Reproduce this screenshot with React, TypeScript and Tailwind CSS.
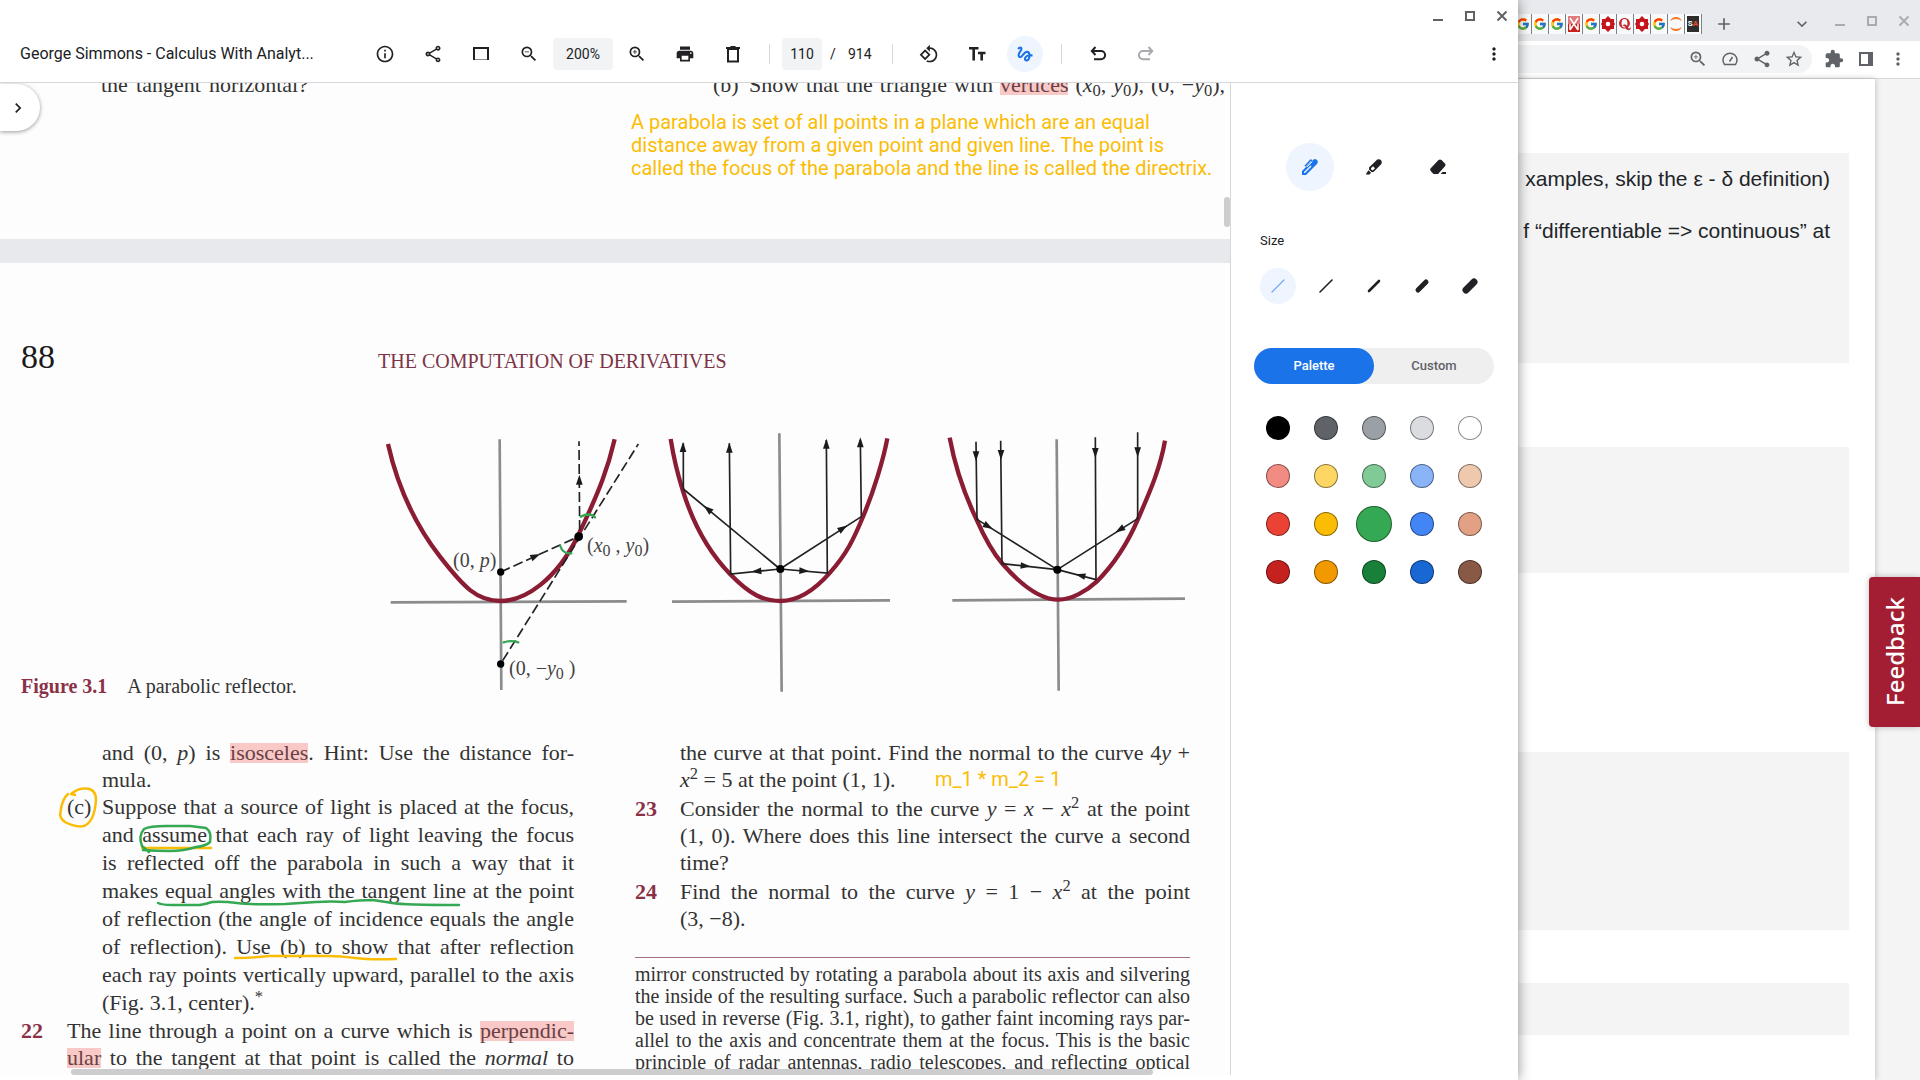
import type { ReactNode } from "react";
import {
  MdChevronRight,
  MdExpandMore,
  MdExtension,
  MdGesture,
  MdInfoOutline,
  MdMoreVert,
  MdOutlineShare,
  MdPrint,
  MdRotate90DegreesCcw,
  MdShare,
  MdStarBorder,
  MdZoomIn,
  MdZoomOut,
  MdAdd,
} from "react-icons/md";
import { FcGoogle } from "react-icons/fc";
import { FaQuora } from "react-icons/fa";

/* ---------- small drawings ---------- */

function WindowControls({ className }: { className: string }) {
  return (
    <div className={`flex gap-4 ${className}`}>
      <button aria-label="Minimize" className="size-4">
        <svg viewBox="0 0 16 16" className="size-4">
          <path d="M3 12h10" stroke="currentColor" strokeWidth="2" />
        </svg>
      </button>
      <button aria-label="Maximize" className="size-4">
        <svg viewBox="0 0 16 16" className="size-4">
          <path d="M4 4h8v8H4z" fill="none" stroke="currentColor" strokeWidth="2" />
        </svg>
      </button>
      <button aria-label="Close" className="size-4">
        <svg viewBox="0 0 16 16" className="size-4">
          <path d="M3.5 3.5l9 9M12.500 3.500l-9 9" stroke="currentColor" strokeWidth="2" />
        </svg>
      </button>
    </div>
  );
}

function ToolButton({ label, active, children }: { label: string; active?: boolean; children: ReactNode }) {
  return (
    <button
      aria-label={label}
      className={`flex size-9 shrink-0 items-center justify-center rounded-full ${active ? "bg-[#eff5fe] text-[#1a73e8]" : ""}`}
    >
      {children}
    </button>
  );
}

function Divider() {
  return <span className="h-5 w-px shrink-0 bg-[#d5d7da]" />;
}

function UndoArrow({ flip }: { flip?: boolean }) {
  return (
    <svg viewBox="0 0 20 20" className={`size-5 ${flip ? "-scale-x-100" : ""}`}>
      <path d="M4 7h9a3.800 3.800 0 0 1 0 8.200H6M7.500 3L3.800 7l3.700 4" fill="none" stroke="currentColor" strokeWidth="2" />
    </svg>
  );
}

/* ---------- toolbar ---------- */

function Toolbar() {
  return (
    <div className="flex h-9 items-center text-[#202124]">
      <h1 className="w-[347px] shrink-0 text-base">George Simmons - Calculus With Analyt...</h1>
      <div className="flex items-center gap-3">
        <ToolButton label="Info">
          <MdInfoOutline className="size-5" />
        </ToolButton>
        <ToolButton label="Share">
          <MdOutlineShare className="size-5" />
        </ToolButton>
        <ToolButton label="Fit page">
          <svg viewBox="0 0 18 18" className="size-[18px]">
            <path d="M2 15V3h14v12" fill="none" stroke="currentColor" strokeWidth="2" />
            <path d="M3 14.500h12" stroke="#8a8c8f" strokeWidth="1" />
          </svg>
        </ToolButton>
        <ToolButton label="Zoom out">
          <MdZoomOut className="size-5" />
        </ToolButton>
      </div>
      <input
        aria-label="Zoom level"
        defaultValue="200%"
        className="mx-[6px] h-8 w-[60px] rounded bg-[#f1f3f4] text-center text-sm outline-none"
      />
      <div className="flex items-center gap-3">
        <ToolButton label="Zoom in">
          <MdZoomIn className="size-5" />
        </ToolButton>
        <ToolButton label="Print">
          <MdPrint className="size-5" />
        </ToolButton>
        <ToolButton label="Delete">
          <svg viewBox="0 0 18 18" className="size-[18px]">
            <path d="M4 4h10v12.500H4zM2 3h14M6.500 2h5" fill="none" stroke="currentColor" strokeWidth="2" />
          </svg>
        </ToolButton>
      </div>
      <div className="ml-[18px] flex items-center gap-3">
        <Divider />
        <div className="flex items-center text-sm">
          <input
            aria-label="Page number"
            defaultValue="110"
            className="h-8 w-10 rounded bg-[#f1f3f4] text-center text-sm outline-none"
          />
          <span className="w-[26px] pl-2">/</span>
          <span>914</span>
        </div>
      </div>
      <div className="ml-5 flex items-center">
        <Divider />
        <div className="mx-[18px] flex items-center gap-3">
          <ToolButton label="Rotate">
            <MdRotate90DegreesCcw className="size-5" />
          </ToolButton>
          <ToolButton label="Text annotation">
            <svg viewBox="0 0 20 20" className="size-5">
              <path d="M2 4.200h9.500M6.700 4.200V16.500M11 9h7.500M14.700 9v7.500" fill="none" stroke="currentColor" strokeWidth="2.600" />
            </svg>
          </ToolButton>
          <ToolButton label="Annotate" active>
            <MdGesture className="size-5" />
          </ToolButton>
        </div>
        <Divider />
        <div className="ml-[18px] flex items-center gap-3">
          <ToolButton label="Undo">
            <UndoArrow />
          </ToolButton>
          <ToolButton label="Redo">
            <span className="text-[#a8aaad]">
              <UndoArrow flip />
            </span>
          </ToolButton>
        </div>
      </div>
      <button aria-label="More options" className="mr-[14px] ml-auto">
        <MdMoreVert className="size-5" />
      </button>
    </div>
  );
}

/* ---------- book page ---------- */

function Line({ children, last }: { children: ReactNode; last?: boolean }) {
  return (
    <span className={`block whitespace-nowrap ${last ? "" : "[text-align-last:justify]"}`}>{children}</span>
  );
}

function Mark({ children }: { children: ReactNode }) {
  return <mark className="inline-block bg-[#f8c9c6] leading-5 text-[#6b4044]">{children}</mark>;
}

function Axes({ v, h }: { v: number[]; h: number[] }) {
  return (
    <g stroke="#8c8c8c" strokeWidth="8">
      <line x1={v[0]} y1={v[1]} x2={v[2]} y2={v[3]} />
      <line x1={h[0]} y1={h[1]} x2={h[2]} y2={h[3]} />
    </g>
  );
}

function Head({ x, y, a }: { x: number; y: number; a: number }) {
  return <polygon points="14,0 -16,10 -16,-10" fill="#1b1b1b" transform={`translate(${x} ${y}) rotate(${a})`} />;
}

const curve = { fill: "none", stroke: "#8a1c34", strokeWidth: 13 };
const ray = { fill: "none", stroke: "#222222", strokeWidth: 5 };
const ink = { fill: "none", stroke: "#34a853", strokeWidth: 7, strokeLinecap: "round" as const };

function Figure() {
  return (
    <svg
      viewBox="378 430 820 270"
      className="h-[270px] w-[820px] shrink-0 font-['Liberation_Serif',serif]"
      role="img"
      aria-label="Three parabolic reflectors"
    >
      <g transform="translate(360 410) scale(0.33333)">
        <Axes v={[419, 88, 424, 840]} h={[92, 577, 800, 574]} />
        <path d="M84 102C115 240 170 350 240 440S350 573 422 573S590 510 655 375S745 170 764 88" {...curve} />
        <path d="M422 486L655 380M659 360L657 94M428 752L835 102" strokeDasharray="30 12" {...ray} />
        <Head x={528} y={438} a={-24} />
        <Head x={658} y={208} a={-90} />
        <circle cx="422" cy="486" r="11" />
        <circle cx="656" cy="380" r="13" />
        <circle cx="422" cy="762" r="11" />
        <path d="M662 320Q690 306 705 322M601 408Q608 432 634 430M431 697Q455 690 475 697" {...ink} />
      </g>
      <g transform="translate(650 410) scale(0.33333)">
        <Axes v={[388, 70, 395, 845]} h={[66, 575, 720, 571]} />
        <path d="M62 87C72 150 82 190 98 240C130 345 180 430 240 492S340 573 392 573S490 545 540 488S610 390 640 318S700 150 712 85" {...curve} />
        <path d="M390 477L100 237V100M390 477L242 492L238 100M390 477L532 489L529 90M390 477L634 320L631 90" {...ray} />
        <Head x={172} y={296} a={220} />
        <Head x={318} y={484} a={175} />
        <Head x={464} y={483} a={4} />
        <Head x={580} y={354} a={-33} />
        <Head x={99} y={110} a={-90} />
        <Head x={238} y={112} a={-90} />
        <Head x={529} y={100} a={-90} />
        <Head x={631} y={96} a={-90} />
        <circle cx="391" cy="477" r="12" />
      </g>
      <g transform="translate(920 410) scale(0.33333)">
        <Axes v={[410, 88, 416, 842]} h={[97, 571, 795, 566]} />
        <path d="M89 83C105 170 130 245 168 325C190 375 220 430 248 462S345 569 415 569C455 569 500 543 530 515C580 465 625 395 655 325S720 180 735 92" {...curve} />
        <path d="M168 95L171 328L412 479M242 92L246 461L412 479M526 82L528 509L412 479M653 67V326L412 479" {...ray} />
        <Head x={168} y={140} a={90} />
        <Head x={243} y={136} a={90} />
        <Head x={526} y={130} a={90} />
        <Head x={653} y={128} a={90} />
        <Head x={206} y={350} a={30} />
        <Head x={318} y={468} a={5} />
        <Head x={480} y={496} a={194} />
        <Head x={598} y={360} a={148} />
        <circle cx="412" cy="479" r="12" />
      </g>
      <g fill="#444444" fontSize="20">
        <text x="453" y="567">(0, <tspan fontStyle="italic">p</tspan>)</text>
        <text x="587" y="552">
          (<tspan fontStyle="italic">x</tspan>
          <tspan fontSize="16" dy="4">0</tspan>
          <tspan dy="-4"> , </tspan>
          <tspan fontStyle="italic">y</tspan>
          <tspan fontSize="16" dy="4">0</tspan>
          <tspan dy="-4">)</tspan>
        </text>
        <text x="509" y="675">
          (0, −<tspan fontStyle="italic">y</tspan>
          <tspan fontSize="16" dy="4">0</tspan>
          <tspan dy="-4"> )</tspan>
        </text>
      </g>
    </svg>
  );
}

/* Pen strokes drawn by hand over the page */
function InkLayer() {
  return (
    <svg
      viewBox="0 83 1230 997"
      className="pointer-events-none absolute top-0 left-0 h-[997px] w-[1230px]"
      fill="none"
      strokeWidth="2.500"
      strokeLinecap="round"
      strokeLinejoin="round"
      aria-hidden="true"
    >
      <g stroke="#fbbc04">
        <path d="M75 795L71 794Q78 788 86 788.500Q96 789 96 800Q95 812 92 818Q88 826 81 826.500Q72 826 65 822Q59 818 60.500 812Q62 799 68 794" />
        <path d="M142 848H211" />
        <path d="M235 958Q250 958 269 956H328Q340 956 355 958T396 959" />
      </g>
      <g stroke="#34a853">
        <path d="M149 852L142 846Q138 836 144 829Q150 826 166 826L190 826L206 828Q212 832 210 842Q206 846 196 847Q184 851 170 851Q156 851 143 850" />
        <path d="M158 903Q162 905 172 905H200Q206 904 212 902Q222 901 237 903T285 904Q300 903 316 902T345 902Q360 900 372 900Q380 901 392 903T459 905" />
      </g>
    </svg>
  );
}

function BookPages() {
  return (
    <main className="relative min-w-0 flex-1 overflow-hidden bg-[#fdfdfd] font-['Liberation_Serif','Times_New_Roman',serif] text-[22px] leading-[27px] text-[#333333]">
      <section className="-mt-3 flex h-[168px] justify-between pr-[5px] pl-[101px]">
        <p className="w-[207px]">
          <Line>the tangent horizontal?</Line>
        </p>
        <p className="grid w-[512px] grid-cols-[36px_1fr]">
          <span>(b)</span>
          <Line>
            Show that the triangle with <Mark>vertices</Mark> (<i>x</i>
            <sub>0</sub>, <i>y</i>
            <sub>0</sub>), (0, −<i>y</i>
            <sub>0</sub>),
          </Line>
        </p>
      </section>
      <div className="h-6 bg-[#e8e9ed]" />
      <section className="pt-[76px] pr-10 pl-[21px]">
        <header className="flex items-baseline">
          <span className="w-[357px] text-[34px] leading-9 text-[#1b1b1b]">88</span>
          <h2 className="text-xl text-[#7c3346]">THE COMPUTATION OF DERIVATIVES</h2>
        </header>
        <figure className="mt-[55px] flex items-end">
          <figcaption className="w-[357px] shrink-0 pb-0.5 text-xl leading-6">
            <b className="mr-5 text-[#8a3047]">Figure 3.1</b>
            <span>A parabolic reflector.</span>
          </figcaption>
          <Figure />
        </figure>
        <div className="mt-[39px] grid grid-cols-[553fr_555fr] gap-[61px]">
          <div className="flex flex-col">
            <p className="pl-[81px]">
              <Line>
                and (0, <i>p</i>) is <Mark>isosceles</Mark>. Hint: Use the distance for-
              </Line>
              <Line last>mula.</Line>
            </p>
            <div className="flex pl-[46px] leading-7">
              <span className="w-[35px] shrink-0">(c)</span>
              <p className="flex-1">
                <Line>Suppose that a source of light is placed at the focus,</Line>
                <Line>and assume that each ray of light leaving the focus</Line>
                <Line>is reflected off the parabola in such a way that it</Line>
                <Line>makes equal angles with the tangent line at the point</Line>
                <Line>of reflection (the angle of incidence equals the angle</Line>
                <Line>of reflection). Use (b) to show that after reflection</Line>
                <Line>each ray points vertically upward, parallel to the axis</Line>
                <Line last>
                  (Fig. 3.1, center).<sup>*</sup>
                </Line>
              </p>
            </div>
            <div className="flex">
              <b className="w-[46px] shrink-0 text-[#8a3047]">22</b>
              <p className="flex-1">
                <Line>
                  The line through a point on a curve which is <Mark>perpendic-</Mark>
                </Line>
                <Line>
                  <Mark>ular</Mark> to the tangent at that point is called the <i>normal</i> to
                </Line>
              </p>
            </div>
          </div>
          <div>
            <div className="flex flex-col gap-0.5">
              <p className="pl-[45px]">
                <Line>
                  the curve at that point. Find the normal to the curve 4<i>y</i> +
                </Line>
                <Line last>
                  <i>x</i>
                  <sup>2</sup> = 5 at the point (1, 1).
                </Line>
              </p>
              <div className="flex">
                <b className="w-[45px] shrink-0 text-[#8a3047]">23</b>
                <p className="flex-1">
                  <Line>
                    Consider the normal to the curve <i>y</i> = <i>x</i> − <i>x</i>
                    <sup>2</sup> at the point
                  </Line>
                  <Line>(1, 0). Where does this line intersect the curve a second</Line>
                  <Line last>time?</Line>
                </p>
              </div>
              <div className="flex">
                <b className="w-[45px] shrink-0 text-[#8a3047]">24</b>
                <p className="flex-1">
                  <Line>
                    Find the normal to the curve <i>y</i> = 1 − <i>x</i>
                    <sup>2</sup> at the point
                  </Line>
                  <Line last>(3, −8).</Line>
                </p>
              </div>
            </div>
            <p className="mt-[25px] border-t border-[#a5707e] pt-[5px] text-xl leading-[22px]">
              <Line>mirror constructed by rotating a parabola about its axis and silvering</Line>
              <Line>the inside of the resulting surface. Such a parabolic reflector can also</Line>
              <Line>be used in reverse (Fig. 3.1, right), to gather faint incoming rays par-</Line>
              <Line>allel to the axis and concentrate them at the focus. This is the basic</Line>
              <Line>principle of radar antennas, radio telescopes, and reflecting optical</Line>
            </p>
          </div>
        </div>
      </section>

      <InkLayer />
      <p className="absolute top-7 left-[631px] font-[Roboto,sans-serif] text-xl leading-[23px] whitespace-nowrap text-[#fbbc04]">
        A parabola is set of all points in a plane which are an equal
        <br />
        distance away from a given point and given line. The point is
        <br />
        called the focus of the parabola and the line is called the directrix.
      </p>
      <p className="absolute top-[685px] left-[935px] font-[Roboto,sans-serif] text-xl leading-[23px] whitespace-nowrap text-[#fbbc04]">
        m_1 * m_2 = 1
      </p>
      <button
        aria-label="Show thumbnails"
        className="absolute top-px left-0 flex h-[47px] w-10 items-center rounded-r-full bg-white pl-2 text-[#202124] shadow-[0_1px_4px_rgba(0,0,0,0.4)]"
      >
        <MdChevronRight className="size-5" />
      </button>
      <div className="absolute top-[114px] right-0 h-[30px] w-[6px] rounded-full bg-[#cdcdcf]" />
      <div className="absolute right-[77px] bottom-0 left-[71px] h-[6px] rounded-full bg-[#cdcdcf]" />
    </main>
  );
}

/* ---------- annotation panel ---------- */

const strokes = [1, 2, 3, 5, 7];

const swatches = [
  ["Black", "bg-[#000000]"],
  ["Dark grey", "bg-[#5f6368]"],
  ["Grey", "bg-[#9aa0a6]"],
  ["Light grey", "bg-[#dadce0]"],
  ["White", "bg-[#ffffff]"],
  ["Light red", "bg-[#f28b82]"],
  ["Light yellow", "bg-[#fdd663]"],
  ["Light green", "bg-[#81c995]"],
  ["Light blue", "bg-[#8ab4f8]"],
  ["Light tan", "bg-[#eec9ae]"],
  ["Red", "bg-[#ea4335]"],
  ["Yellow", "bg-[#fbbc04]"],
  ["Green", "bg-[#34a853]"],
  ["Blue", "bg-[#4285f4]"],
  ["Tan", "bg-[#e2a185]"],
  ["Dark red", "bg-[#c5221f]"],
  ["Orange", "bg-[#f29900]"],
  ["Dark green", "bg-[#188038]"],
  ["Dark blue", "bg-[#1967d2]"],
  ["Brown", "bg-[#885945]"],
];

function AnnotationPanel() {
  return (
    <aside className="flex w-[288px] shrink-0 flex-col border-l border-[#d5d7da] bg-white pr-6 pl-[23px] text-[#202124]">
      <div className="mt-[60px] flex justify-center gap-4">
        <button aria-label="Pen" className="flex size-12 items-center justify-center rounded-full bg-[#eff5fe] text-[#1a73e8]">
          <svg viewBox="0 0 18 18" className="size-[18px]">
            <path d="M1 17V13L12.300 1.700Q14 .500 15.500 1.800L16.300 2.600Q17.500 4.200 16.200 5.700L5 17z" fill="currentColor" />
            <path d="M3 15V14L9.500 7.500L10.500 8.500L4 15z" fill="#eff5fe" />
            <path d="M11.300 3.600L6 8.900" stroke="#eff5fe" strokeWidth="1" />
            <path d="M4 8.300L9.600 2.200L11.200 2.800" fill="none" stroke="currentColor" strokeWidth="1.500" />
          </svg>
        </button>
        <button aria-label="Highlighter" className="flex size-12 items-center justify-center">
          <svg viewBox="0 0 18 18" className="size-[18px]">
            <path
              d="M4 9.500L12.300 1.600Q14.200 .500 16 2.100Q17.500 4 16.400 5.900L8.500 14H6.500L4 11.500zM6 10.300V11.200L7.200 12.300H8L10 10.200L8 8.300z"
              fillRule="evenodd"
              fill="currentColor"
            />
            <path d="M3.400 12.200L6 14.800L4.600 16.500H.700z" fill="currentColor" />
          </svg>
        </button>
        <button aria-label="Eraser" className="flex size-12 items-center justify-center">
          <svg viewBox="0 0 18 18" className="size-[18px]">
            <path d="M1.500 10.500L9.500 2Q11 .800 12.500 2L16.200 5.800Q17 7 16 8.300L9 16H4.500L1.500 12.700Q.800 11.500 1.500 10.500zM13.500 14H17V16H11.700z" fill="currentColor" />
          </svg>
        </button>
      </div>
      <fieldset className="mt-10">
        <legend className="pl-[6px] text-[13px] leading-5">Size</legend>
        <div className="mt-[17px] flex justify-center gap-3">
          {strokes.map((w, i) => (
            <label
              key={w}
              className={`flex size-9 items-center justify-center rounded-full ${i === 0 ? "bg-[#eff5fe] text-[#6fa8f8]" : ""}`}
            >
              <input type="radio" name="size" defaultChecked={i === 0} aria-label={`Size ${i + 1}`} className="sr-only" />
              <svg viewBox="0 0 18 18" className="size-[18px]">
                <path
                  d={w > 3 ? "M5 13L13 5" : w === 3 ? "M4 14L14 4" : "M3 15L15 3"}
                  stroke="currentColor"
                  strokeWidth={w === 1 ? 1.2 : w === 2 ? 1.6 : w === 3 ? 2.6 : w}
                  strokeLinecap="round"
                />
              </svg>
            </label>
          ))}
        </div>
      </fieldset>
      <div className="mt-11 grid grid-cols-2 rounded-full bg-[#efefef] text-[13px] font-medium">
        <button className="h-9 rounded-full bg-[#1a73e8] text-white">Palette</button>
        <button className="h-9 text-[#5f6368]">Custom</button>
      </div>
      <div className="mt-5 grid grid-cols-5 place-items-center self-center">
        {swatches.map(([name, bg]) => (
          <span key={name} className="flex size-12 items-center justify-center">
            <input
              type="radio"
              name="color"
              aria-label={name}
              defaultChecked={name === "Green"}
              className={`size-6 appearance-none rounded-full border border-black/45 checked:size-9 ${bg}`}
            />
          </span>
        ))}
      </div>
    </aside>
  );
}

/* ---------- browser behind ---------- */

function RedFlower() {
  return (
    <svg viewBox="0 0 16 16" className="size-4">
      <path d="M8 0L11 3H14V6.500L15 8L14 9.500V13H11L8 16L5 13H2V9.500L1 8L2 6.500V3H5z" fill="#c5161d" />
      <circle cx="8" cy="8" r="2.300" fill="#ffffff" />
    </svg>
  );
}

function Browser() {
  const tabs: ReactNode[] = [
    <FcGoogle className="size-[14px]" />,
    <FcGoogle className="size-[14px]" />,
    <FcGoogle className="size-[14px]" />,
    <svg viewBox="0 0 16 16" className="size-4">
      <path d="M2 0h12v8H2z" fill="#e07a7c" />
      <path d="M2 8h12v8H2z" fill="#c5221f" />
      <path d="M4 2L12 14M12 2L4 14M4 14V8M12 14V8" fill="none" stroke="#ffffff" strokeWidth="1.500" />
    </svg>,
    <FcGoogle className="size-[14px]" />,
    <RedFlower />,
    <FaQuora className="size-[14px] text-[#c0282d]" />,
    <RedFlower />,
    <FcGoogle className="size-[14px]" />,
    <svg viewBox="0 0 16 16" className="size-4">
      <path d="M2 5Q4 1 8 1T14 5Q11 3 8 3T2 5zM2 11Q4 15 8 15T14 11Q11 13 8 13T2 11z" fill="#f37726" />
    </svg>,
    <span className="flex h-4 w-3 items-center justify-center bg-[#2d2d2d] text-[8px] font-bold text-white">
      S<span className="text-[#e8502a]">A</span>
    </span>,
  ];
  return (
    <div className="flex min-w-0 flex-col overflow-hidden bg-white text-[#5f6368]">
      <div className="flex h-[41px] shrink-0 bg-[#e8eaed]">
        <div className="mt-[14px] flex h-5 w-[184px] justify-end overflow-hidden">
          {tabs.map((icon, i) => (
            <span key={i} className="flex w-[17px] shrink-0 items-center justify-center border-r border-[#7d8084] bg-white/70">
              {icon}
            </span>
          ))}
        </div>
        <button aria-label="New tab" className="mt-[14px] ml-3 h-5">
          <MdAdd className="size-5" />
        </button>
        <button aria-label="Search tabs" className="mt-[14px] ml-auto h-5">
          <MdExpandMore className="size-5" />
        </button>
        <WindowControls className="mt-[13px] mr-2 ml-5 text-[#a9abae]" />
      </div>
      <div className="flex h-[38px] shrink-0 items-start border-b border-[#d8dadd] bg-white pt-1">
        <div className="flex h-7 flex-1 items-center justify-end gap-3 rounded-r-full bg-[#f1f3f4] pr-2">
          <button aria-label="Zoom">
            <MdZoomIn className="size-5" />
          </button>
          <button aria-label="Performance">
            <svg viewBox="0 0 20 20" className="size-5">
              <path d="M4.500 15.500A7 7 0 1 1 15.500 15.500zM9.500 12.500L12.500 8" fill="none" stroke="currentColor" strokeWidth="1.500" />
            </svg>
          </button>
          <button aria-label="Share">
            <MdShare className="size-5" />
          </button>
          <button aria-label="Bookmark">
            <MdStarBorder className="size-5" />
          </button>
        </div>
        <div className="ml-3 flex h-7 items-center gap-3 pr-3">
          <button aria-label="Extensions">
            <MdExtension className="size-5" />
          </button>
          <button aria-label="Side panel">
            <svg viewBox="0 0 20 20" className="size-5">
              <path d="M3 3h14v14H3zM5 5v10h7V5z" fillRule="evenodd" fill="currentColor" />
            </svg>
          </button>
          <button aria-label="Menu">
            <MdMoreVert className="size-5" />
          </button>
        </div>
      </div>
      <div className="relative flex flex-1 bg-[#f4f4f4]">
        <div className="min-w-0 flex-1 bg-white pt-[74px] pr-[26px] shadow-[0_0_6px_rgba(0,0,0,0.25)]">
          <div className="flex h-[210px] flex-col items-end bg-[#f4f4f4] pt-[13px] pr-[19px] font-['Liberation_Sans',Arial,sans-serif] text-[21px] leading-[26px] whitespace-nowrap text-[#212529]">
            <p>xamples, skip the ε - δ definition)</p>
            <p className="mt-[26px]">f “differentiable =&gt; continuous” at</p>
          </div>
          <div className="mt-[84px] h-[126px] bg-[#f4f4f4]" />
          <div className="mt-[179px] h-[178px] bg-[#f4f4f4]" />
          <div className="mt-[53px] h-[52px] bg-[#f4f4f4]" />
        </div>
        <div className="w-[45px] shrink-0" />
        <button className="absolute top-[498px] right-0 flex h-[150px] w-[51px] rotate-180 items-center justify-center rounded-r-sm bg-[#a31e32] font-['Noto_Sans',sans-serif] text-2xl font-medium text-white shadow-[0_0_6px_rgba(0,0,0,0.25)] [writing-mode:vertical-rl]">
          Feedback
        </button>
      </div>
    </div>
  );
}

export default function App() {
  return (
    <div className="grid h-screen grid-cols-[minmax(0,1fr)_402px] overflow-hidden bg-white font-[Roboto,sans-serif]">
      <div className="relative z-10 flex min-w-0 flex-col bg-white shadow-[0_0_12px_rgba(0,0,0,0.45)]">
        <div className="flex h-9 shrink-0 justify-end pt-2 pr-2 text-[#5f6368]">
          <WindowControls className="" />
        </div>
        <div className="h-[47px] shrink-0 border-b border-[#d5d7da] pl-5">
          <Toolbar />
        </div>
        <div className="mb-[5px] flex min-h-0 flex-1">
          <BookPages />
          <AnnotationPanel />
        </div>
      </div>
      <Browser />
    </div>
  );
}
